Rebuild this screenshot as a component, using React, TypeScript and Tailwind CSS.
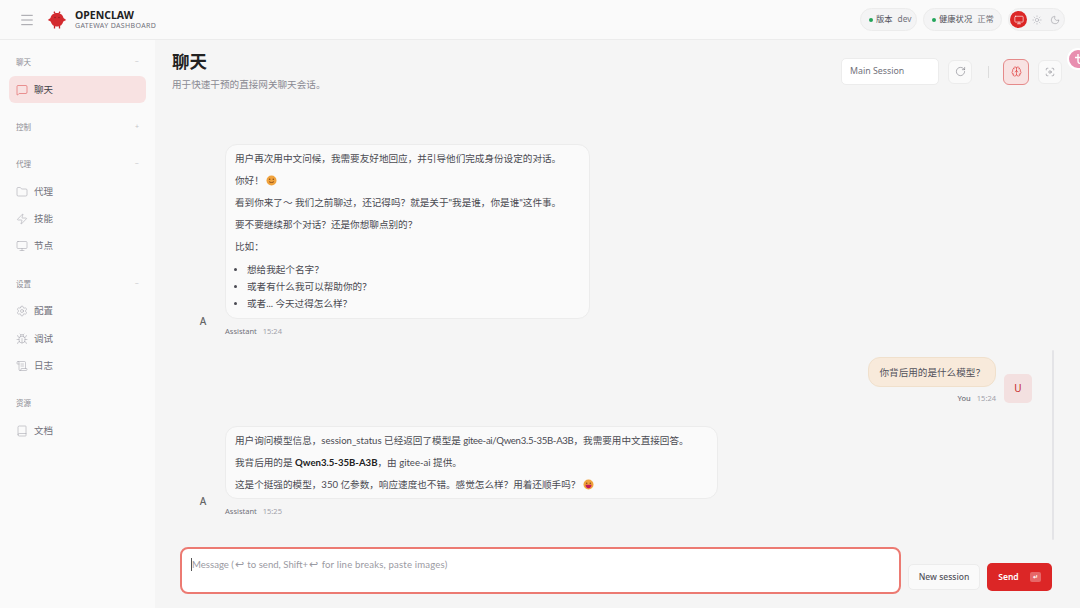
import React from 'react'
import {
  Book,
  Brain,
  Bug,
  Focus,
  Folder,
  Menu,
  MessageSquare,
  Monitor,
  Moon,
  RotateCw,
  ScrollText,
  Settings,
  Sun,
  Zap,
} from 'lucide-react'

const FONT = "font-['Noto_Sans','Noto_Sans_CJK_SC',sans-serif]"
const CHAT_FONT = "font-['Lato','Noto_Sans_CJK_SC',sans-serif]"

const navGroups = [
  { title: '聊天', sign: '−', items: [{ label: '聊天', icon: MessageSquare, active: true }] },
  { title: '控制', sign: '+', items: [] },
  {
    title: '代理',
    sign: '−',
    items: [
      { label: '代理', icon: Folder },
      { label: '技能', icon: Zap },
      { label: '节点', icon: Monitor },
    ],
  },
  {
    title: '设置',
    sign: '−',
    items: [
      { label: '配置', icon: Settings },
      { label: '调试', icon: Bug },
      { label: '日志', icon: ScrollText },
    ],
  },
  { title: '资源', sign: '', items: [{ label: '文档', icon: Book }] },
]

const Logo = () => (
  <svg width="20" height="18" viewBox="0 0 20 18">
    <path d="M10 2C6 2 4 4.500 3.500 7L.8 9l2.900 1.500C4.500 13.500 6.500 15.500 10 15.500s5.500-2 6.300-5L19.200 9l-2.700-2C16 4.500 14 2 10 2z" fill="#d32a2e" />
    <path d="M7.500 15v2.500M12.500 15v2.500M8 2.500L7 .6M12 2.500L13 .6" stroke="#c42529" strokeWidth="1.300" />
    <circle cx="8" cy="6.500" r=".7" fill="#8a1a1d" />
    <circle cx="12" cy="6.500" r=".7" fill="#8a1a1d" />
  </svg>
)

const Emoji = ({ open }: { open?: boolean }) => (
  <svg width="11" height="11" viewBox="0 0 11 11" className="inline-block align-[-1.500px]">
    <circle cx="5.500" cy="5.500" r="5" fill="#f0a23c" />
    <circle cx="3.700" cy="4.200" r=".8" fill="#8a4b14" />
    <circle cx="7.300" cy="4.200" r=".8" fill="#8a4b14" />
    {open ? (
      <path d="M2.500 5.800h6c0 2.200-1.300 3.400-3 3.400s-3-1.200-3-3.400z" fill="#c2185b" />
    ) : (
      <path d="M3 6.500c.6 1.300 4.400 1.300 5 0" stroke="#8a4b14" strokeWidth=".9" fill="none" />
    )}
  </svg>
)

const AssistantBubble = ({ children, time }: { children: React.ReactNode; time: string }) => (
  <div className="flex items-end gap-[17px] pl-[43px]">
    <div className="flex w-[10px] shrink-0 justify-center pb-[7px] text-[10px] font-medium text-[#666]">A</div>
    <div className="flex flex-col gap-[7px]">
      <div className={`rounded-[12px] border border-[#ececec] bg-[#fafafa] py-[6px] pl-[9px] pr-[28px] text-[9.600px] leading-[15px] text-[#4a4a52] ${CHAT_FONT}`}>
        {children}
      </div>
      <div className="flex h-[10px] items-center gap-[6px] text-[7.500px] leading-[10px]">
        <span className="text-[#71717a]">Assistant</span>
        <span className="text-[#a1a1aa]">{time}</span>
      </div>
    </div>
  </div>
)

export default function App() {
  return (
    <div className={`flex h-[608px] w-[1080px] flex-col overflow-hidden bg-[#f5f5f5] ${FONT}`}>
      {/* Top bar */}
      <header className="flex h-[40px] shrink-0 items-center justify-between border-b border-[#ececec] bg-[#fafafa] pl-[19px] pr-[15px]">
        <div className="flex items-center">
          <Menu size={16} strokeWidth={1.200} className="text-[#8a8a92]" />
          <div className="ml-[12px] flex items-center gap-[8px]">
            <Logo />
            <div className="flex flex-col pt-[1px]">
              <span className="text-[10.500px] font-bold leading-[11px] text-[#222]">OPENCLAW</span>
              <span className="text-[7px] leading-[9px] tracking-[.35px] text-[#71717a]">GATEWAY DASHBOARD</span>
            </div>
          </div>
        </div>
        <div className="flex items-center gap-[6px]">
          <div className="flex h-[23px] w-[57px] items-center rounded-full border border-[#ececec] bg-[#f4f4f5] pl-[8px] text-[8.300px] text-[#52525b]">
            <span className="h-[4px] w-[4px] rounded-full bg-[#22a45a]" />
            <span className="ml-[3px]">版本</span>
            <span className="ml-[5px] text-[#71717a]">dev</span>
          </div>
          <div className="flex h-[23px] w-[79px] items-center rounded-full border border-[#ececec] bg-[#f4f4f5] pl-[8px] text-[8.300px] text-[#52525b]">
            <span className="h-[4px] w-[4px] rounded-full bg-[#22a45a]" />
            <span className="ml-[3px]">健康状况</span>
            <span className="ml-[5px] text-[#71717a]">正常</span>
          </div>
          <div className="flex h-[23px] w-[57px] items-center gap-[1px] rounded-full border border-[#ececec] bg-[#f4f4f5] px-[1px]">
            <div className="flex h-[17px] w-[17px] items-center justify-center rounded-full bg-[#dc2626]">
              <Monitor size={10} strokeWidth={1.500} className="text-white" />
            </div>
            <div className="flex h-[17px] w-[17px] items-center justify-center">
              <Sun size={10} strokeWidth={1.200} className="text-[#a1a1aa]" />
            </div>
            <div className="flex h-[17px] w-[17px] items-center justify-center">
              <Moon size={10} strokeWidth={1.200} className="text-[#8a8a92]" />
            </div>
          </div>
        </div>
      </header>

      <div className="flex min-h-0 flex-1">
        {/* Sidebar */}
        <aside className="flex w-[155px] shrink-0 flex-col bg-[#fafafa] pl-[9px] pr-[9px] pt-[15.500px]">
          {navGroups.map((group) => (
            <div key={group.title} className={group.items.length > 0 ? 'mb-[17.300px] flex flex-col' : 'mb-[23px] flex flex-col'}>
              <div className="flex h-[14px] items-center justify-between pl-[7px] pr-[7px] text-[7.500px] text-[#8a8a92]">
                <span>{group.title}</span>
                <span className="text-[7px] text-[#c4c4c8]">{group.sign}</span>
              </div>
              {group.items.length > 0 && (
                <div className="mt-[6.500px] flex flex-col">
                  {group.items.map((item) => {
                    const Icon = item.icon
                    const active = 'active' in item && item.active
                    return (
                      <div
                        key={item.label}
                        className={
                          active
                            ? 'flex h-[27.300px] items-center gap-[6px] rounded-[6px] bg-[#f8e2e2] pl-[7px] text-[9.500px] text-[#3f3f46]'
                            : 'flex h-[27.300px] items-center gap-[6px] pl-[7px] text-[9.500px] text-[#71717a]'
                        }
                      >
                        <Icon size={12} strokeWidth={1.100} className={active ? 'text-[#dc4a4a]' : 'text-[#a1a1aa]'} />
                        <span>{item.label}</span>
                      </div>
                    )
                  })}
                </div>
              )}
            </div>
          ))}
        </aside>

        {/* Main */}
        <main className="relative flex min-w-0 flex-1 flex-col">
          <div className="flex h-[104px] shrink-0 items-start justify-between pl-[17px] pr-[18px] pt-[9px]">
            <div className="flex flex-col">
              <h1 className="text-[17.500px] font-bold leading-[24px] text-[#222]">聊天</h1>
              <p className="mt-[5px] text-[9.600px] leading-[14px] text-[#8a8a92]">用于快速干预的直接网关聊天会话。</p>
            </div>
            <div className="mt-[9px] flex items-center">
              <div className="flex h-[27px] w-[98px] items-center rounded-[5px] border border-[#ececec] bg-white pl-[8px] text-[8.800px] text-[#71717a]">
                Main Session
              </div>
              <div className="ml-[9px] flex h-[24px] w-[24px] items-center justify-center rounded-[6px] border border-[#ececec] bg-[#fafafa]">
                <RotateCw size={11} strokeWidth={1.200} className="text-[#71717a]" />
              </div>
              <div className="ml-[16px] h-[12px] w-px bg-[#dcdcdc]" />
              <div className="ml-[14px] flex h-[26px] w-[26px] items-center justify-center rounded-[6px] border border-[#e58a8a] bg-[#f8e2e2]">
                <Brain size={11} strokeWidth={1.200} className="text-[#dc2626]" />
              </div>
              <div className="ml-[9px] flex h-[24px] w-[24px] items-center justify-center rounded-[6px] border border-[#ececec] bg-[#fafafa]">
                <Focus size={10} strokeWidth={1.200} className="text-[#71717a]" />
              </div>
            </div>
          </div>

          {/* Thread */}
          <div className="flex min-h-0 flex-1 flex-col">
            <AssistantBubble time="15:24">
              <p className="mb-[7px]">用户再次用中文问候，我需要友好地回应，并引导他们完成身份设定的对话。</p>
              <p className="mb-[7px]">你好！ <Emoji /></p>
              <p className="mb-[7px]">看到你来了～ 我们之前聊过，还记得吗？就是关于"我是谁，你是谁"这件事。</p>
              <p className="mb-[7px]">要不要继续那个对话？还是你想聊点别的？</p>
              <p className="mb-[7px]">比如：</p>
              <ul className="list-disc pl-[12px] leading-[17px]">
                <li>想给我起个名字？</li>
                <li>或者有什么我可以帮助你的？</li>
                <li>或者... 今天过得怎么样？</li>
              </ul>
            </AssistantBubble>

            <div className="mt-[21px] flex items-end justify-end gap-[8px] pr-[48px]">
              <div className="flex flex-col items-end gap-[6px]">
                <div className={`rounded-[12px] border border-[#f0e0cc] bg-[#f8eadb] px-[10px] py-[6.500px] text-[9.600px] leading-[15px] text-[#52525b] ${CHAT_FONT}`}>
                  你背后用的是什么模型？
                </div>
                <div className="flex h-[10px] items-center gap-[6px] text-[7.500px] leading-[10px]">
                  <span className="font-medium text-[#71717a]">You</span>
                  <span className="text-[#a1a1aa]">15:24</span>
                </div>
              </div>
              <div className="flex h-[29px] w-[28px] items-center justify-center rounded-[5px] bg-[#f3e0e0] text-[10px] text-[#c62828]">
                U
              </div>
            </div>

            <div className="mt-[23px]">
              <AssistantBubble time="15:25">
                <p className="mb-[7px]">
                  用户询问模型信息，session_status 已经返回了模型是 <span className="tracking-[-.3px]">gitee-ai/Qwen3.5-35B-A3B</span>，我需要用中文直接回答。
                </p>
                <p className="mb-[7px]">
                  我背后用的是 <strong className="font-bold text-[#222]">Qwen3.5-35B-A3B</strong>，由 gitee-ai 提供。
                </p>
                <p>这是个挺强的模型，350 亿参数，响应速度也不错。感觉怎么样？用着还顺手吗？ <Emoji open /></p>
              </AssistantBubble>
            </div>
          </div>

          {/* Composer */}
          <div className="flex h-[61px] shrink-0 items-start pl-[25px] pr-[28px]">
            <div className={`flex h-[47px] min-w-0 flex-1 rounded-[8px] border-2 border-[#ec7a72] bg-white pl-[9px] pt-[9px] text-[9.600px] leading-[13px] text-[#9a9aa2] ${CHAT_FONT}`}>
              <span className="h-[13px] w-px bg-[#555]" />
              <span>
                Message (<span className="inline-block w-[11px] text-center text-[11px] leading-none">↩</span> to send, Shift+<span className="inline-block w-[11px] text-center text-[11px] leading-none">↩</span> <span className="tracking-[.17px]">for line breaks, paste images)</span>
              </span>
            </div>
            <div className="ml-[7px] mt-[17px] flex h-[26px] w-[72px] items-center justify-center rounded-[5px] border border-[#ececec] bg-[#fafafa] text-[8.500px] font-medium text-[#52525b]">
              New session
            </div>
            <div className="ml-[7px] mt-[16px] flex h-[28px] w-[65px] items-center justify-center gap-[11px] rounded-[5px] bg-[#dc2626] text-[8.500px] font-semibold text-white">
              Send
              <span className="flex h-[10px] w-[11px] items-center justify-center rounded-[2px] bg-white/30 text-[6px] leading-none">↵</span>
            </div>
          </div>

          {/* Thread scrollbar */}
          <div className="absolute left-[897px] top-[310px] h-[190px] w-[2px] rounded-full bg-[#e4e4e7]" />

          {/* Floating avatar cut by the window edge */}
          <div className="absolute left-[912px] top-[8px] flex h-[22px] w-[22px] items-center justify-center rounded-full border-2 border-white bg-[#e88fb0]">
            <svg width="10" height="12" viewBox="0 0 10 12" fill="none" stroke="white" strokeWidth="1.400">
              <path d="M5 1v7c0 2 1.500 3 3.500 2M2 4.500h6" />
            </svg>
          </div>
        </main>
      </div>
    </div>
  )
}
